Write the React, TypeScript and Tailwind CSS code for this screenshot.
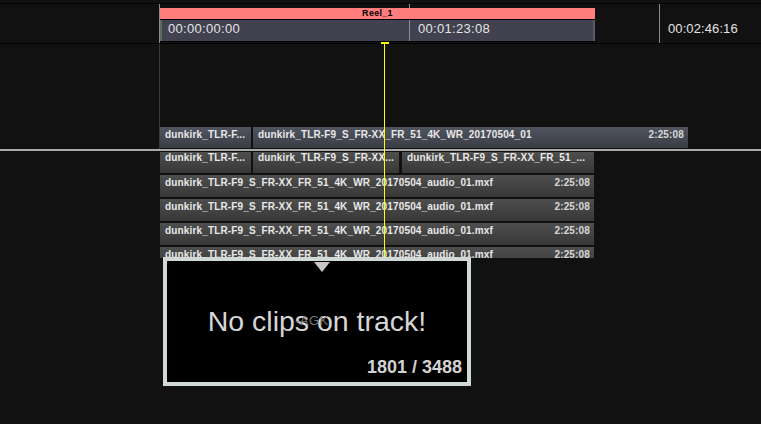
import React from "react";

const clipText =
  "flex justify-between shrink-0 text-[10px] leading-[12px] font-bold tracking-[0.15px] text-[#e8e8e8] pl-[5px] pr-[4px] overflow-hidden whitespace-nowrap";
const blue = "bg-linear-to-b from-[#51555f] to-[#3a3d46]";
const gray = "bg-linear-to-b from-[#4e4e4e] to-[#383838]";

const AUDIO = "dunkirk_TLR-F9_S_FR-XX_FR_51_4K_WR_20170504_audio_01.mxf";

export default function App() {
  return (
    <div className="relative w-[761px] h-[424px] overflow-hidden bg-[#111111] font-['Liberation_Sans',Arial,sans-serif]">
      {/* top */}
      <div className="h-[3px]" />
      <div className="h-px bg-black" />
      {/* ruler */}
      <div className="flex h-[39px]">
        <div className="w-[159px] shrink-0" />
        <div className="w-[436px] shrink-0 border-l border-[#8c8c8c] flex flex-col">
          <div className="h-[4px] flex">
            <div className="ml-[249px] w-px bg-[#8c8c8c]" />
          </div>
          <div className="h-[11px] bg-[#ff7d7d] text-black text-[9px] leading-[11px] font-bold tracking-[0.3px] text-center">
            Reel_1
          </div>
          <div className="h-px bg-black" />
          <div className="h-[21px] flex bg-[#41414f] text-[13px] leading-[15px] tracking-[0.3px] text-[#e4e4e4]">
            <div className="w-[2px] bg-[#5b6b58]" />
            <div className="w-[247px] pl-[6px] pt-px">00:00:00:00</div>
            <div className="w-px bg-[#8c8c8c]" />
            <div className="flex-1 pl-[8px] pt-px">00:01:23:08</div>
            <div className="w-[2px] bg-[#5a5a62]" />
          </div>
          <div className="h-px bg-black" />
        </div>
        <div className="w-[64px] shrink-0" />
        <div className="flex-1 border-l border-[#8c8c8c] pl-[8px] pt-[17px] text-[13px] leading-[15px] tracking-[0.1px] text-[#e4e4e4]">
          00:02:46:16
        </div>
      </div>
      <div className="h-px bg-black" />

      {/* upper tracks */}
      <div className="flex h-[105px]">
        <div className="w-[160px] shrink-0 border-r border-[#3a3a3a]" />
        <div className="flex-1 flex flex-col justify-end pb-px">
          <div className="flex gap-[2px] h-[21px]">
            <div className={`${clipText} ${blue} w-[91px] pt-[2px]`}>
              <span>dunkirk_TLR-F...</span>
            </div>
            <div className={`${clipText} ${blue} w-[435px] pt-[2px]`}>
              <span>dunkirk_TLR-F9_S_FR-XX_FR_51_4K_WR_20170504_01</span>
              <span className="text-[#d8d8d8]">2:25:08</span>
            </div>
          </div>
        </div>
      </div>

      {/* separator */}
      <div className="h-[2px] bg-[#a9a9a9]" />

      {/* lower tracks */}
      <div className="h-[107px] overflow-hidden pl-[160px] pt-px flex flex-col gap-[2px]">
        <div className="flex h-[21px] shrink-0">
          <div className={`${clipText} ${gray} w-[91px]`}>
            <span>dunkirk_TLR-F...</span>
          </div>
          <div className={`${clipText} ${gray} w-[146px] ml-[2px]`}>
            <span>dunkirk_TLR-F9_S_FR-XX...</span>
          </div>
          <div className={`${clipText} ${gray} w-[192px] ml-[3px]`}>
            <span>dunkirk_TLR-F9_S_FR-XX_FR_51_...</span>
          </div>
        </div>
        {[0, 1, 2, 3].map((i) => (
          <div key={i} className={`${clipText} ${gray} w-[434px] h-[22px] pt-[2px]`}>
            <span>{AUDIO}</span>
            <span className="text-[#d8d8d8]">2:25:08</span>
          </div>
        ))}
      </div>

      {/* playhead */}
      <div className="absolute left-[381px] top-[42px] w-[8px] h-[2px] bg-[#ffff00]" />
      <div className="absolute left-[384px] top-[43px] w-px h-[214px] bg-[#ffff00]" />

      {/* popup */}
      <div className="absolute left-[163px] top-[257px] w-[308px] h-[129px] border-4 border-[#d0d8d8] bg-black flex flex-col">
        <div className="ml-[147px] mt-px w-0 h-0 border-l-[8px] border-r-[8px] border-t-[10px] border-l-transparent border-r-transparent border-t-[#c8c8c8]" />
        <div className="relative mt-[33px] h-[32px] text-[28.5px] leading-[32px] text-center text-[#d6d6d6]">
          <span className="relative">No clips on track!</span>
          <span className="absolute left-[128px] top-[9px] text-[13px] leading-[14px] tracking-[0.5px] text-[#777777]">-AGK</span>
        </div>
        <div className="mt-[20px] h-[20px] text-[18px] leading-[20px] font-bold text-right pr-[5px] text-[#d2d2d2]">
          1801 / 3488
        </div>
      </div>
    </div>
  );
}
